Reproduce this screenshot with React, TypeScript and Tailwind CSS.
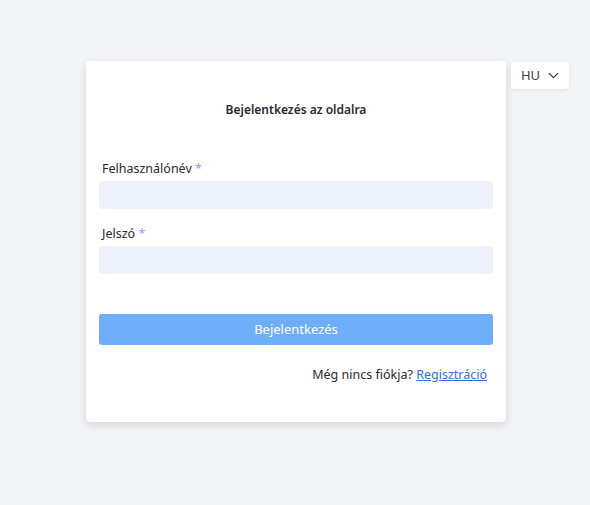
import React, { useState } from "react";

const App = () => {
  const [username, setUsername] = useState("");
  const [password, setPassword] = useState("");

  return (
    <div
      className="min-h-[505px] w-full bg-[#f3f5f9] flex justify-center pt-[61px] pl-[2px]"
      style={{ fontFamily: '"Noto Sans", "Open Sans", sans-serif' }}
    >
      <div className="relative w-[420px] h-[361px] bg-white rounded-[4px] shadow-[0_3px_10px_rgba(0,0,0,0.14)] px-[13px]">
        {/* language picker */}
        <button className="absolute left-full top-[1px] ml-[5px] w-[58px] h-[27px] bg-white rounded-[4px] shadow-[0_1px_4px_rgba(0,0,0,0.08)] flex items-center justify-center gap-[7px] text-[13px] text-[#3a3a4a]">
          <span className="ml-[1px]">HU</span>
          <svg width="13" height="13" viewBox="0 0 24 24" fill="none" stroke="#333" strokeWidth="2.2" strokeLinecap="round" strokeLinejoin="round">
            <path d="M4 8l8 8 8-8" />
          </svg>
        </button>

        <h1 className="text-center text-[12px] font-semibold text-[#262a30] pt-[39px] leading-[20px]">
          Bejelentkezés az oldalra
        </h1>

        <form onSubmit={(e) => e.preventDefault()} className="flex flex-col mt-[40px]">
          <label className="text-[12.5px] text-[#2a2a2a] pl-[3px] leading-[18px]">
            Felhasználónév <span className="text-[#8e9cf2]">*</span>
          </label>
          <input
            value={username}
            onChange={(e) => setUsername(e.target.value)}
            className="mt-[3px] h-[28px] w-full rounded-[3px] bg-[#edf2fd] outline-none px-2 text-[13px]"
          />
          <label className="mt-[16px] text-[12.5px] text-[#2a2a2a] pl-[3px] leading-[18px]">
            Jelszó <span className="text-[#8e9cf2]">*</span>
          </label>
          <input
            type="password"
            value={password}
            onChange={(e) => setPassword(e.target.value)}
            className="mt-[3px] h-[28px] w-full rounded-[3px] bg-[#edf2fd] outline-none px-2 text-[13px]"
          />
          <button
            type="submit"
            className="mt-[40px] h-[31px] w-full rounded-[3px] bg-[#6eaef9] text-white text-[13px]"
          >
            Bejelentkezés
          </button>
          <p className="mt-[21px] text-right pr-[6px] text-[12.5px] text-[#2a2a2a] leading-[18px]">
            Még nincs fiókja?{" "}
            <a href="#" className="text-[#2f6ef0] underline">
              Regisztráció
            </a>
          </p>
        </form>
      </div>
    </div>
  );
};

export default App;
